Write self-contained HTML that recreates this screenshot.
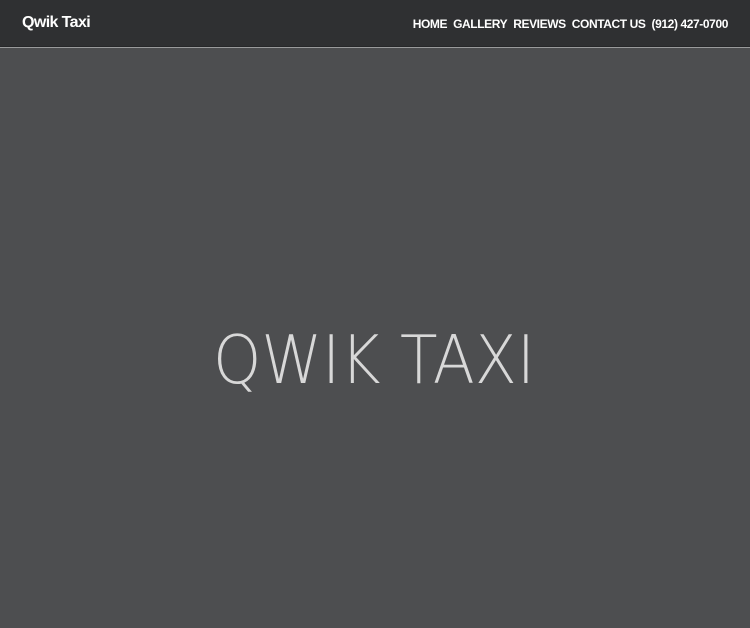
<!DOCTYPE html>
<html><head><meta charset="utf-8"><style>
html,body{margin:0;padding:0;width:750px;height:628px;overflow:hidden;background:#4d4e50;font-family:"Liberation Sans",sans-serif;}
.hdr{position:absolute;left:0;top:0;width:750px;height:46px;background:#2f3032;border-bottom:1px solid #262729;}
.line{position:absolute;left:0;top:47px;width:750px;height:1px;background:#9a9b9c;}
.logo{position:absolute;left:22px;top:14px;color:#fff;font-size:16px;font-weight:bold;letter-spacing:-0.6px;}
.nav{position:absolute;right:22px;top:17px;color:#fff;font-size:12px;font-weight:bold;letter-spacing:-0.4px;}
.nav span{margin-left:6px;}
svg{position:absolute;left:0;top:0;}
</style></head><body>
<div class="hdr"></div><div class="line"></div>
<div class="logo">Qwik Taxi</div>
<div class="nav"><span>HOME</span><span>GALLERY</span><span>REVIEWS</span><span>CONTACT US</span><span>(912) 427-0700</span></div>
<svg width="750" height="628"><text x="213" y="383" textLength="322" lengthAdjust="spacingAndGlyphs" fill="#d8d8d8" font-family="DejaVu Sans ExtraLight, DejaVu Sans, sans-serif" font-weight="200" font-size="67">QWIK TAXI</text></svg>
</body></html>
